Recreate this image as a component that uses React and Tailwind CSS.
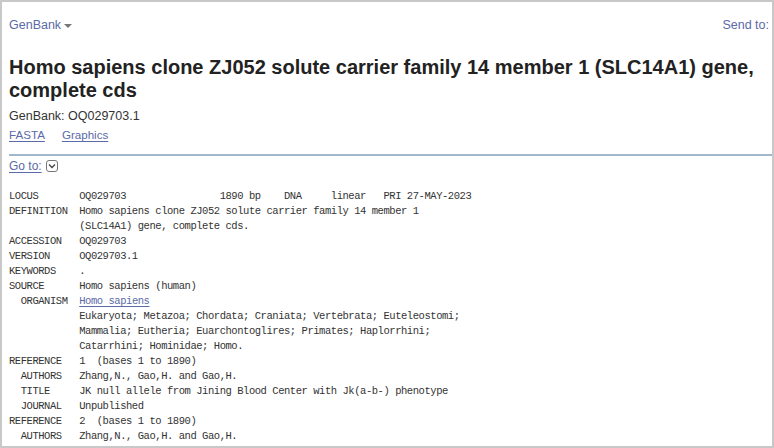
import React from "react";

function Link({ children }) {
  return <span className="text-[#5b6aa8] underline underline-offset-2">{children}</span>;
}

export default function App() {
  const L = (s) => <div className="h-[15px] leading-[15px] whitespace-pre">{s}</div>;
  return (
    <div className="w-[774px] h-[448px] border-2 border-[#c8c8c8] bg-white overflow-hidden font-['Liberation_Sans',Arial,sans-serif]">
      <div className="pl-[7px]">
        <div className="flex items-center justify-between pt-[15px] h-[31px] mr-[-9px] text-[12.5px] leading-[16px] text-[#5b6aa8]">
          <div className="flex items-center">
            <span>GenBank</span>
            <span className="ml-[3px] mt-[2px] w-0 h-0 border-l-[4px] border-r-[4px] border-t-[4px] border-l-transparent border-r-transparent border-t-[#777]"></span>
          </div>
          <div className="flex items-center">
            <span>Send to:</span>
            <span className="ml-[4px] mt-[2px] w-0 h-0 border-l-[4px] border-r-[4px] border-t-[4px] border-l-transparent border-r-transparent border-t-[#777]"></span>
          </div>
        </div>
        <h1 className="mt-[23px] text-[20px] leading-[23px] font-bold text-[#222] pr-[10px]">
          Homo sapiens clone ZJ052 solute carrier family 14 member 1 (SLC14A1) gene, complete cds
        </h1>
        <div className="mt-[6px] text-[12.5px] leading-[16px] text-[#333]">GenBank: OQ029703.1</div>
        <div className="mt-[3px] text-[11.6px] leading-[16px] flex gap-[17px]">
          <Link>FASTA</Link>
          <Link>Graphics</Link>
        </div>
        <div className="mt-[11px] h-[2px] bg-[#a3b7cc]"></div>
        <div className="mt-[2px] flex items-center text-[12px] leading-[16px]">
          <Link>Go to:</Link>
          <span className="ml-[4px] w-[12px] h-[12px] border border-[#777] rounded-[3px] flex items-center justify-center">
            <svg width="8" height="6" viewBox="0 0 8 6"><path d="M1 1.5 L4 4.5 L7 1.5" fill="none" stroke="#444" strokeWidth="1.3" /></svg>
          </span>
        </div>
        <div className="mt-[15px] font-['Liberation_Mono',monospace] text-[10.5px] tracking-[-0.45px] text-[#333]">
          {L("LOCUS       OQ029703                1890 bp    DNA     linear   PRI 27-MAY-2023")}
          {L("DEFINITION  Homo sapiens clone ZJ052 solute carrier family 14 member 1")}
          {L("            (SLC14A1) gene, complete cds.")}
          {L("ACCESSION   OQ029703")}
          {L("VERSION     OQ029703.1")}
          {L("KEYWORDS    .")}
          {L("SOURCE      Homo sapiens (human)")}
          <div className="h-[15px] leading-[15px] whitespace-pre">{"  ORGANISM  "}<Link>Homo sapiens</Link></div>
          {L("            Eukaryota; Metazoa; Chordata; Craniata; Vertebrata; Euteleostomi;")}
          {L("            Mammalia; Eutheria; Euarchontoglires; Primates; Haplorrhini;")}
          {L("            Catarrhini; Hominidae; Homo.")}
          {L("REFERENCE   1  (bases 1 to 1890)")}
          {L("  AUTHORS   Zhang,N., Gao,H. and Gao,H.")}
          {L("  TITLE     JK null allele from Jining Blood Center with Jk(a-b-) phenotype")}
          {L("  JOURNAL   Unpublished")}
          {L("REFERENCE   2  (bases 1 to 1890)")}
          {L("  AUTHORS   Zhang,N., Gao,H. and Gao,H.")}
        </div>
      </div>
    </div>
  );
}
